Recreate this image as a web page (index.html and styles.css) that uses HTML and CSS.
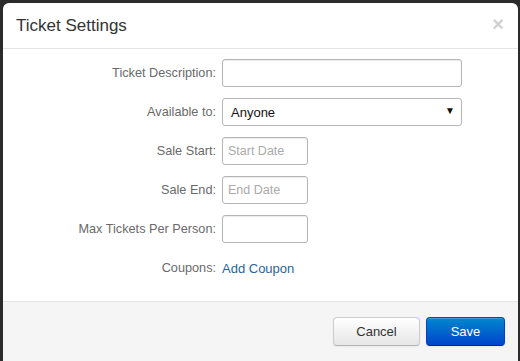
FILE: index.html
```html
<!DOCTYPE html>
<html lang="en">
<head>
    <meta charset="UTF-8">
    <title>Ticket Settings</title>
    <link rel="stylesheet" href="styles.css">
</head>
<body>

    <div class="modal">
        <div class="modal-header">
            <span class="modal-title">Ticket Settings</span>
            <span class="modal-close">&times;</span>
        </div>

        <div class="modal-body">
            <div class="form-row">
                <label class="form-label">Ticket Description:</label>
                <input type="text" class="input input-wide">
            </div>

            <div class="form-row">
                <label class="form-label">Available to:</label>
                <div class="select-wrap">
                    <div class="select">Anyone</div>
                </div>
            </div>

            <div class="form-row">
                <label class="form-label">Sale Start:</label>
                <input type="text" class="input input-small" placeholder="Start Date">
            </div>

            <div class="form-row">
                <label class="form-label">Sale End:</label>
                <input type="text" class="input input-small" placeholder="End Date">
            </div>

            <div class="form-row">
                <label class="form-label">Max Tickets Per Person:</label>
                <input type="text" class="input input-small">
            </div>

            <div class="form-row">
                <label class="form-label">Coupons:</label>
                <a href="#" class="link">Add Coupon</a>
            </div>
        </div>

        <div class="modal-footer">
            <button class="btn">Cancel</button>
            <button class="btn btn-primary">Save</button>
        </div>
    </div>

</body>
</html>
```

FILE: styles.css
```css
body {
    font-family: 'Liberation Sans', Arial, sans-serif;
    margin: 0;
    padding: 3px 2px 0 3px;
    background-color: #2b2b2b;
    height: 361px;
    box-sizing: border-box;
    overflow: hidden;
}

.modal {
    background: #fff;
    border-radius: 6px;
    height: 364px;
    overflow: hidden;
}

.modal-header {
    display: flex;
    justify-content: space-between;
    align-items: center;
    height: 45px;
    padding: 0 13px;
    border-bottom: 1px solid #e5e5e5;
}

.modal-title {
    font-size: 17px;
    color: #333;
    margin-top: 1px;
}

.modal-close {
    font-size: 20px;
    font-weight: bold;
    color: #d0d0d0;
    line-height: 1;
    margin-top: -4px;
    margin-right: 1px;
}

.modal-body {
    display: flex;
    flex-direction: column;
    gap: 11px;
    padding: 10px 0 0;
    height: 252px;
    box-sizing: border-box;
}

.form-row {
    display: flex;
    align-items: center;
    height: 28px;
}

.form-label {
    width: 213px;
    padding-right: 6px;
    text-align: right;
    font-size: 12.7px;
    color: #6a6a6a;
}

.input {
    height: 28px;
    box-sizing: border-box;
    border: 1px solid #b5b5b5;
    border-radius: 3px;
    box-shadow: inset 0 1px 1px rgba(0, 0, 0, 0.08);
    padding: 0 5px;
    font-family: inherit;
    font-size: 12.5px;
    color: #333;
    outline: none;
}

.input::placeholder {
    color: #aaa;
}

.input-wide {
    width: 240px;
}

.input-small {
    width: 86px;
}

.select-wrap {
    position: relative;
}

.select {
    width: 240px;
    height: 28px;
    box-sizing: border-box;
    border: 1px solid #b5b5b5;
    border-radius: 3px;
    padding: 0 8px;
    font-size: 13px;
    line-height: 27px;
    color: #111;
}

.select-wrap::after {
    content: "\25BC";
    position: absolute;
    right: 7px;
    top: 7px;
    font-size: 10px;
    color: #111;
}

.link {
    color: #2a6496;
    font-size: 13px;
    text-decoration: none;
}

.modal-footer {
    display: flex;
    justify-content: flex-end;
    gap: 6px;
    padding: 15px 13px 0 0;
    height: 60px;
    background: #f5f5f5;
    border-top: 1px solid #e5e5e5;
    box-sizing: border-box;
}

.btn {
    height: 29px;
    min-width: 87px;
    padding: 0 14px;
    font-family: inherit;
    font-size: 13px;
    color: #333;
    background: linear-gradient(#ffffff, #e6e6e6);
    border: 1px solid #cccccc;
    border-bottom-color: #b3b3b3;
    border-radius: 4px;
    box-shadow: inset 0 1px 0 rgba(255, 255, 255, 0.2), 0 1px 2px rgba(0, 0, 0, 0.05);
}

.btn-primary {
    min-width: 79px;
    color: #fff;
    background: linear-gradient(#0088cc, #0044cc);
    border-color: #0044cc #0044cc #002a80;
}
```
